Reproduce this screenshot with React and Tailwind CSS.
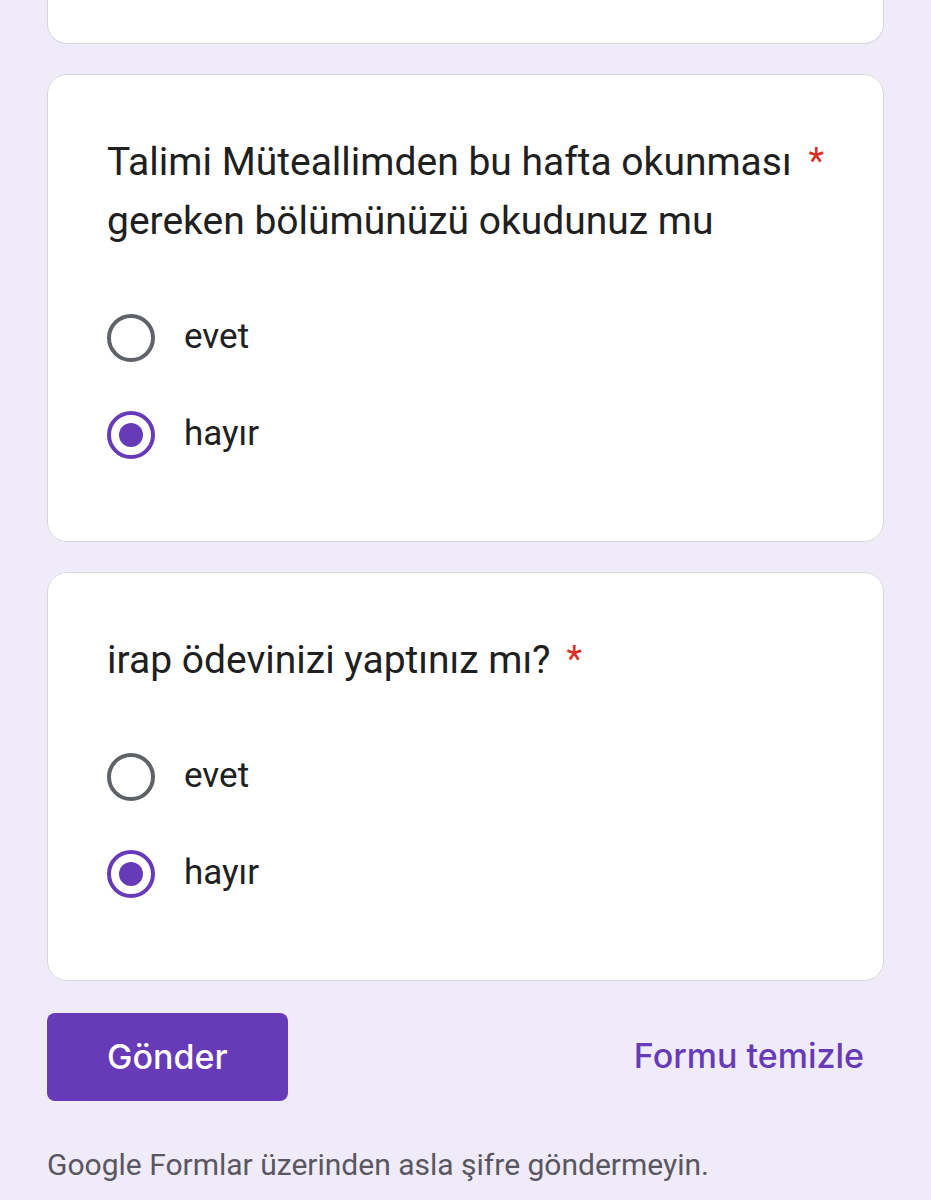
import { useState } from "react";

const questions = [
  { id: "talim", text: "Talimi Müteallimden bu hafta okunması gereken bölümünüzü okudunuz mu" },
  { id: "irap", text: "irap ödevinizi yaptınız mı?" },
];

const options = ["evet", "hayır"];

function Question({ id, text, value, onChange }) {
  return (
    <fieldset className="min-w-0 rounded-[20px] border border-[#d8d6dc] bg-white px-[59px] py-[58px]">
      <div className="flex items-start">
        <h2 id={id} className="text-[39px] leading-[59px] text-[#202020]">{text}</h2>
        <span className="ml-4 shrink-0 text-[36px] leading-14 text-[#d93025]">*</span>
      </div>
      <div role="radiogroup" aria-labelledby={id} className="mt-[38px]">
        {options.map((option) => (
          <label key={option} className="flex h-[97px] cursor-pointer items-center gap-[29px] text-[35px] leading-12 text-[#202020]">
            <input
              type="radio"
              name={id}
              value={option}
              checked={value === option}
              onChange={() => onChange(option)}
              className="size-12 shrink-0 appearance-none rounded-full border-4 border-[#5f6368] bg-white bg-clip-content p-2 checked:border-[#673ab7] checked:bg-[#673ab7]"
            />
            <span className="pb-0.5">{option}</span>
          </label>
        ))}
      </div>
    </fieldset>
  );
}

export default function App() {
  const [answers, setAnswers] = useState({ talim: "hayır", irap: "hayır" });

  return (
    <main className="min-h-screen bg-[#efebf8] px-[47px] font-[Roboto,sans-serif]">
      <form onSubmit={(e) => e.preventDefault()}>
        <div className="h-11 rounded-b-[20px] border border-t-0 border-[#d8d6dc] bg-white" />
        <div className="mt-[30px] flex flex-col gap-[30px]">
          {questions.map((q) => (
            <Question
              key={q.id}
              {...q}
              value={answers[q.id]}
              onChange={(v) => setAnswers({ ...answers, [q.id]: v })}
            />
          ))}
        </div>
        <div className="mt-8 flex items-center justify-between font-[Inter,sans-serif] text-[34px] font-medium">
          <button type="submit" className="h-[88px] rounded-lg bg-[#673ab7] px-[60px] pb-0.5 text-white">
            Gönder
          </button>
          <button type="button" onClick={() => setAnswers({})} className="px-5 pb-1 text-[#673ab7]">
            Formu temizle
          </button>
        </div>
      </form>
      <p className="mt-10 text-[30px] leading-12 text-[#5a5662]">
        Google Formlar üzerinden asla şifre göndermeyin.
      </p>
    </main>
  );
}
